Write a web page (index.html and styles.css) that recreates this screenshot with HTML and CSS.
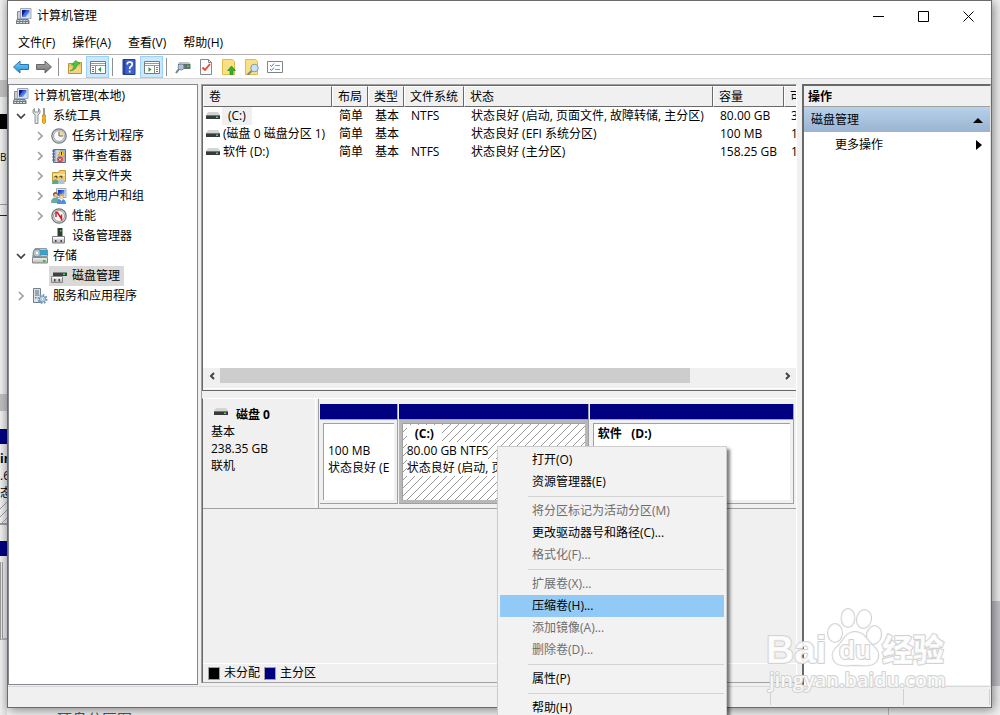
FILE: index.html
```html
<!DOCTYPE html>
<html lang="zh-CN">
<head>
<meta charset="utf-8">
<title>计算机管理</title>
<link rel="stylesheet" href="styles.css">
</head>
<body>
<svg class="sprites" aria-hidden="true">
  <defs>
    <linearGradient id="screen" x1="0" y1="0" x2="1" y2="1"><stop offset="0" stop-color="#0a1fa8"/><stop offset=".5" stop-color="#3f6fe0"/><stop offset="1" stop-color="#b9dcff"/></linearGradient>
    <linearGradient id="blue" x1="0" y1="0" x2="0" y2="1"><stop offset="0" stop-color="#7fd0f5"/><stop offset="1" stop-color="#1b8fdc"/></linearGradient>
    <linearGradient id="gray" x1="0" y1="0" x2="0" y2="1"><stop offset="0" stop-color="#b0b0b0"/><stop offset="1" stop-color="#707070"/></linearGradient>
    <linearGradient id="metal" x1="0" y1="0" x2="0" y2="1"><stop offset="0" stop-color="#f4f4f4"/><stop offset="1" stop-color="#b5b5b5"/></linearGradient>
  </defs>
  <symbol id="i-computer" viewBox="0 0 16 16"><path d="M1.500 3.500h3V11h-3z" fill="#c9ccd0" stroke="#8a8e94"/><path d="M4.500 .5h10.500v10H4.500z" fill="#dfe2e6" stroke="#a3a8af"/><path d="M6 2h7.500v7H6z" fill="url(#screen)"/><path d="M6 2h4l-4 6z" fill="#0a1890"/><path d="M10 9l3.500-5v5z" fill="#c5e2ff"/><path d="M1 11h11l1.500 2v3H0v-3z" fill="#6d7d8a"/><path d="M1.500 12.500h10M1 14.500h11" stroke="#d5dde2" stroke-dasharray="2 1"/></symbol>
  <symbol id="i-tools" viewBox="0 0 16 16"><path d="M2.500 .5L1 2v3l2 2v8.500h3V7l2-2V2L6.500 .5V4h-4z" fill="#dfe2e4" stroke="#7b7f83" stroke-width=".8"/><path d="M12 0v8" stroke="#777" stroke-width="1.500"/><path d="M10.500 7h3v2l-.5 1 .5 1v3.500l-1 1h-1l-1-1V11l.5-1-.5-1z" fill="#f7b71c" stroke="#c98400" stroke-width=".8"/></symbol>
  <symbol id="i-clock" viewBox="0 0 16 16"><circle cx="8" cy="8" r="7.200" fill="#d4d6d8" stroke="#777b80" stroke-width="1.200"/><circle cx="8" cy="8" r="5.400" fill="#fafafa" stroke="#a4a7aa"/><path d="M8 8V3.200A4.800 4.800 0 0 1 12.800 8z" fill="#f7dc9a"/><path d="M8 3.500V8h4" fill="none" stroke="#666"/></symbol>
  <symbol id="i-event" viewBox="0 0 16 16"><path d="M2.500 1.500h12v13h-12z" fill="#a7b6cc" stroke="#5d6d86"/><path d="M5 3h4M5 5h3M5 7h3M5 9h2M5 11h2M5 13h3" stroke="#e8eef8"/><path d="M1 3h3M1 6h3M1 9h3M1 12h3" stroke="#4c5a70"/><path d="M10.500 2l3.500 6H7z" fill="#ffd51c" stroke="#c49000" stroke-width=".6"/><path d="M10.500 4v3" stroke="#333"/><circle cx="9" cy="11.500" r="2.800" fill="#d9333b"/><path d="M8 10.500l2 2m0-2l-2 2" stroke="#fff"/></symbol>
  <symbol id="i-share" viewBox="0 0 16 16"><path d="M1.500 4.500h6l1-2h6v11h-13z" fill="#f3cd68" stroke="#c59a31"/><path d="M2 6h12v2H2z" fill="#fae6a0"/><circle cx="5" cy="9" r="1.600" fill="#5b4933"/><circle cx="10" cy="9" r="1.600" fill="#5b4933"/><circle cx="4.500" cy="10" r="1" fill="#f0c9a0"/><circle cx="9.500" cy="10" r="1" fill="#f0c9a0"/><path d="M1 16q0-4.500 3.500-4.500T8 16z" fill="#57aa8a"/><path d="M7 16q0-4.500 3.500-4.500T13.500 16z" fill="#a9c4de"/></symbol>
  <symbol id="i-users" viewBox="0 0 16 16"><path d="M5.500 .5h9.500v9H5.500z" fill="#dfe2e6" stroke="#a3a8af"/><path d="M7 2h6.500v6H7z" fill="url(#screen)"/><circle cx="4.500" cy="6.500" r="2.500" fill="#8b5e2c"/><circle cx="4.900" cy="7.300" r="1.600" fill="#f2c99c"/><path d="M0 15q0-5.500 4.500-5.500T9 15z" fill="#68a9a2"/><circle cx="10.500" cy="8.500" r="2.400" fill="#d9ab52"/><circle cx="10.500" cy="9.200" r="1.500" fill="#f7d9b0"/><path d="M6 16q0-5 4.500-5t4.500 5z" fill="#4f8de0"/><path d="M9 11h3l-1.500 2z" fill="#fff"/></symbol>
  <symbol id="i-perf" viewBox="0 0 16 16"><circle cx="8" cy="8" r="7.200" fill="#ddd" stroke="#6f7274" stroke-width="1.200"/><circle cx="8" cy="8" r="5.400" fill="#fff" stroke="#999"/><path d="M5 9V4.500h1.500L10.500 11V6.500" stroke="#cf1c24" stroke-width="1.500" fill="none"/></symbol>
  <symbol id="i-device" viewBox="0 0 16 16"><path d="M6.500 0h5v9h-5z" fill="#353b3d"/><path d="M9 2h1.500v1.500H9z" fill="#32df45"/><path d="M1.500 8.500h12V15h-12z" fill="url(#metal)" stroke="#808080"/><path d="M2 9h11v1.500H2z" fill="#fff"/><path d="M4 12h1.500v2H4zM9.500 12H11v2H9.500z" fill="#444"/></symbol>
  <symbol id="i-storage" viewBox="0 0 16 16"><path d="M.5 8.500L3 .5h11.500l1 8z" fill="#e5e7e9" stroke="#92979b"/><circle cx="5" cy="5" r="4" fill="#b7c3ca" stroke="#788"/><circle cx="5" cy="5" r="1.200" fill="#fff"/><path d="M8 2h7.500v5H8z" fill="#2fa6d4" stroke="#6b8190" stroke-width=".6"/><path d="M.5 9.500h15V15H.5z" fill="url(#metal)" stroke="#888"/><path d="M11 12h2.500v2H11z" fill="#25c72d"/></symbol>
  <symbol id="i-diskmgr" viewBox="0 0 16 16"><path d="M4 2h10l2 2.500H2z" fill="#d6d6d6"/><path d="M2 4.500h14V8H2z" fill="#3c4245"/><path d="M12 5.500h2v1.500h-2z" fill="#30e046"/><path d="M.5 8.500h11v6H.5z" fill="url(#metal)" stroke="#888"/><path d="M1 9h10v1H1z" fill="#fff"/><path d="M3 11h1.500v2.500H3zM7.500 11H9v2.500H7.500z" fill="#444"/></symbol>
  <symbol id="i-services" viewBox="0 0 16 16"><path d="M1.500 .5h7v14h-7z" fill="#dce2e7" stroke="#72808d"/><path d="M3 3h4M3 5h4M3 7h4" stroke="#5a6875"/><path d="M3 9h1.500v1.500H3z" fill="#57a43c"/><circle cx="10.500" cy="11" r="4" fill="none" stroke="#6a93b8" stroke-width="2" stroke-dasharray="1.600 1.500"/><circle cx="10.500" cy="11" r="3" fill="#c9def0" stroke="#6a93b8"/><circle cx="10.500" cy="11" r="1.200" fill="#fff" stroke="#6a93b8" stroke-width=".5"/></symbol>
  <symbol id="i-drive" viewBox="0 0 14 8"><path d="M2 0h10l2 3H0z" fill="#d4d4d4"/><path d="M0 3h14v4H0z" fill="#363b3d"/><path d="M0 3h14v1H0z" fill="#707577"/><path d="M10 4.500h2v1.500h-2z" fill="#2bec3f"/></symbol>
  <symbol id="i-back" viewBox="0 0 16 16"><path d="M.5 8L7 2v3.500h8.500v5H7V14z" fill="url(#blue)" stroke="#2474b0"/></symbol>
  <symbol id="i-forward" viewBox="0 0 16 16"><path d="M15.500 8L9 2v3.500H.5v5H9V14z" fill="url(#gray)" stroke="#666"/></symbol>
  <symbol id="i-up" viewBox="0 0 16 16"><path d="M1.500 4.500h6l1-1h6v11h-13z" fill="#eec56a" stroke="#bf9238"/><path d="M2 8h12v6H2z" fill="#f5d384"/><path d="M3 12Q7 10 7 6H4.500L8.500 1.500 13 4.500 10 6Q9.500 11 3 12z" fill="#45c83b" stroke="#228a20" stroke-width=".5"/></symbol>
  <symbol id="i-treepane" viewBox="0 0 16 16"><path d="M.5 2.500h15v12H.5z" fill="#fff" stroke="#777c80"/><path d="M1 4.500h14M1 6.500h14" stroke="#999"/><path d="M5.500 7v7" stroke="#888"/><path d="M2 8.500h2M2 10.500h2M2 12.500h2" stroke="#3586cb"/><path d="M11 8v5l-3-2.500z" fill="#25a236"/></symbol>
  <symbol id="i-actionpane" viewBox="0 0 16 16"><path d="M.5 2.500h15v12H.5z" fill="#fff" stroke="#777c80"/><path d="M1 4.500h14M1 6.500h14" stroke="#999"/><path d="M10.500 7v7" stroke="#888"/><path d="M12 8.500h2M12 10.500h2M12 12.500h2" stroke="#3586cb"/><path d="M4.500 8v5l3-2.500z" fill="#25a236"/></symbol>
  <symbol id="i-help" viewBox="0 0 16 16"><path d="M2 .5h12v15H2z" fill="#3d62c9" stroke="#263e91"/><path d="M2 1h2.500v14H2z" fill="#2a449d"/><path d="M6.300 5.500Q6 3 8.700 3T11.200 5.500Q11.200 7 9.500 7.800 8.700 8.300 8.700 10M8.700 11.500v2" fill="none" stroke="#fff" stroke-width="1.700"/></symbol>
  <symbol id="i-find" viewBox="0 0 16 16"><path d="M3 5h12.500v5H3z" fill="#666c70"/><path d="M4 3h10l1.500 2H3z" fill="#c4c4c4"/><path d="M12 6.500h2v1.500h-2z" fill="#2edf43"/><circle cx="6" cy="8" r="3" fill="#a9c6dd" stroke="#7e8e9b"/><path d="M4 10L1 14" stroke="#71828f" stroke-width="2"/></symbol>
  <symbol id="i-check" viewBox="0 0 16 16"><path d="M2.500 .5h8l3 3v12h-11z" fill="#fafafa" stroke="#888"/><path d="M10.500 .5v3h3" fill="none" stroke="#888"/><path d="M4.500 8.500l2.500 2.500 5-6" stroke="#e0472f" stroke-width="1.800" fill="none"/></symbol>
  <symbol id="i-export" viewBox="0 0 16 16"><path d="M1.500 .5h10l2 2v13h-12z" fill="#fbe083" stroke="#e2bc4b"/><path d="M9 15.500v-4H6.500L10.500 7l4 4.500H12v4z" fill="#30b332" stroke="#158418" stroke-width=".6"/></symbol>
  <symbol id="i-search" viewBox="0 0 16 16"><path d="M1.500 .5h10l2 2v13h-12z" fill="#fbe083" stroke="#e2bc4b"/><path d="M7.500 12l-4 4" stroke="#72889a" stroke-width="2"/><circle cx="10.500" cy="9" r="3.800" fill="#c7e3f5" stroke="#8199aa"/></symbol>
  <symbol id="i-list" viewBox="0 0 16 16"><path d="M.5 2.500h15v11H.5z" fill="#fff" stroke="#7d858b"/><path d="M8 6.500h5M8 10.500h5" stroke="#999"/><path d="M3 6l1.500 1.500L7 4.500M3 10l1.500 1.500L7 8.500" stroke="#3288d0" fill="none"/></symbol>
  <symbol id="i-open" viewBox="0 0 12 12"><path d="M2 4l4 4 4-4" fill="none" stroke="#404040" stroke-width="1.700"/></symbol>
  <symbol id="i-closed" viewBox="0 0 12 12"><path d="M4 2l4 4-4 4" fill="none" stroke="#a0a0a0" stroke-width="1.700"/></symbol>
</svg>

<div class="backdrop" aria-hidden="true">
  <div class="strip"><i class="bar bar-scroll"></i><i class="bar bar-black"></i><span class="bd-b">B</span><i class="bar bar-line"></i><i class="bar bar-scroll2"></i><i class="bar bar-navy"></i><b>in</b><span>.6</span><span>态</span><i class="bar bar-hatch"></i><i class="bar bar-navy"></i><i class="bar bar-tail"></i></div>
  <i class="side"></i>
  <span class="caption">硬盘分区图-4</span>
  <i class="tick"></i>
</div>

<main class="window">
  <header class="titlebar">
    <svg class="icon"><use href="#i-computer"/></svg>
    <h1>计算机管理</h1>
    <button aria-label="最小化"><svg viewBox="0 0 11 11"><path d="M0 5.500h11"/></svg></button>
    <button aria-label="最大化"><svg viewBox="0 0 11 11"><path d="M.5 .5h10v10H.5z"/></svg></button>
    <button aria-label="关闭"><svg viewBox="0 0 11 11"><path d="M.5 .5l10 10m0-10l-10 10"/></svg></button>
  </header>
  <nav class="menubar"><button>文件(F)</button><button>操作(A)</button><button>查看(V)</button><button>帮助(H)</button></nav>
  <div class="toolbar">
    <button aria-label="后退"><svg class="icon"><use href="#i-back"/></svg></button>
    <button aria-label="前进"><svg class="icon"><use href="#i-forward"/></svg></button>
    <i class="sep"></i>
    <button aria-label="向上"><svg class="icon"><use href="#i-up"/></svg></button>
    <button class="on" aria-label="显示控制台树"><svg class="icon"><use href="#i-treepane"/></svg></button>
    <i class="sep"></i>
    <button aria-label="帮助"><svg class="icon"><use href="#i-help"/></svg></button>
    <button class="on" aria-label="显示操作窗格"><svg class="icon"><use href="#i-actionpane"/></svg></button>
    <i class="sep"></i>
    <button aria-label="重新扫描"><svg class="icon"><use href="#i-find"/></svg></button>
    <button aria-label="属性"><svg class="icon"><use href="#i-check"/></svg></button>
    <button aria-label="导出"><svg class="icon"><use href="#i-export"/></svg></button>
    <button aria-label="查找"><svg class="icon"><use href="#i-search"/></svg></button>
    <button aria-label="设置"><svg class="icon"><use href="#i-list"/></svg></button>
  </div>

  <div class="panes">
    <ul class="tree">
      <li class="l0"><span class="label"><svg class="icon"><use href="#i-computer"/></svg>计算机管理(本地)</span></li>
      <li class="l1"><svg class="chev"><use href="#i-open"/></svg><span class="label"><svg class="icon"><use href="#i-tools"/></svg>系统工具</span></li>
      <li class="l2"><svg class="chev"><use href="#i-closed"/></svg><span class="label"><svg class="icon"><use href="#i-clock"/></svg>任务计划程序</span></li>
      <li class="l2"><svg class="chev"><use href="#i-closed"/></svg><span class="label"><svg class="icon"><use href="#i-event"/></svg>事件查看器</span></li>
      <li class="l2"><svg class="chev"><use href="#i-closed"/></svg><span class="label"><svg class="icon"><use href="#i-share"/></svg>共享文件夹</span></li>
      <li class="l2"><svg class="chev"><use href="#i-closed"/></svg><span class="label"><svg class="icon"><use href="#i-users"/></svg>本地用户和组</span></li>
      <li class="l2"><svg class="chev"><use href="#i-closed"/></svg><span class="label"><svg class="icon"><use href="#i-perf"/></svg>性能</span></li>
      <li class="l2"><i class="chev"></i><span class="label"><svg class="icon"><use href="#i-device"/></svg>设备管理器</span></li>
      <li class="l1"><svg class="chev"><use href="#i-open"/></svg><span class="label"><svg class="icon"><use href="#i-storage"/></svg>存储</span></li>
      <li class="l2"><i class="chev"></i><span class="label selected"><svg class="icon"><use href="#i-diskmgr"/></svg>磁盘管理</span></li>
      <li class="l1"><svg class="chev"><use href="#i-closed"/></svg><span class="label"><svg class="icon"><use href="#i-services"/></svg>服务和应用程序</span></li>
    </ul>

    <section class="center">
      <div class="volumes">
        <div class="table-wrap">
          <table>
            <colgroup><col class="c-vol"><col class="c-short"><col class="c-short"><col class="c-fs"><col class="c-state"><col class="c-size"><col class="c-free"></colgroup>
            <thead><tr><th>卷</th><th>布局</th><th>类型</th><th>文件系统</th><th>状态</th><th>容量</th><th>可</th></tr></thead>
            <tbody>
              <tr><td><svg class="drive"><use href="#i-drive"/></svg><span class="vol focus">(C:)</span></td><td>简单</td><td>基本</td><td>NTFS</td><td>状态良好 (启动, 页面文件, 故障转储, 主分区)</td><td>80.00 GB</td><td>3</td></tr>
              <tr><td><svg class="drive"><use href="#i-drive"/></svg><span class="vol">(磁盘 0 磁盘分区 1)</span></td><td>简单</td><td>基本</td><td></td><td>状态良好 (EFI 系统分区)</td><td>100 MB</td><td>1</td></tr>
              <tr><td><svg class="drive"><use href="#i-drive"/></svg><span class="vol">软件 (D:)</span></td><td>简单</td><td>基本</td><td>NTFS</td><td>状态良好 (主分区)</td><td>158.25 GB</td><td>1</td></tr>
            </tbody>
          </table>
        </div>
        <div class="hscroll">
          <button aria-label="向左滚动"><svg viewBox="0 0 8 8"><path d="M6 1L3 4l3 3"/></svg></button>
          <div class="track"><div class="thumb"></div></div>
          <button aria-label="向右滚动"><svg viewBox="0 0 8 8"><path d="M2 1l3 3-3 3"/></svg></button>
        </div>
      </div>
      <div class="graph">
        <div class="disk">
          <div class="disk-info">
            <h2><svg class="drive"><use href="#i-drive"/></svg>磁盘 0</h2>
            <p>基本</p><p>238.35 GB</p><p>联机</p>
          </div>
          <div class="parts">
            <div class="part p-efi"><div class="cap"></div><div class="box"><p class="name"></p><p>100 MB</p><p>状态良好 (E</p></div></div>
            <div class="part p-c"><div class="cap"></div><div class="box"><p class="name"><span>(C:)</span></p><p><span>80.00 GB NTFS</span></p><p><span>状态良好 (启动, 页面文件</span></p></div></div>
            <div class="part p-d"><div class="cap"></div><div class="box"><p class="name">软件&nbsp;&nbsp; (D:)</p></div></div>
          </div>
        </div>
        <div class="legend"><i class="key k-free"></i>未分配<i class="key k-primary"></i>主分区</div>
      </div>
    </section>

    <aside class="actions">
      <h2>操作</h2>
      <button class="group">磁盘管理<svg viewBox="0 0 10 6"><path d="M0 6l5-5 5 5z"/></svg></button>
      <button class="more">更多操作<svg viewBox="0 0 6 10"><path d="M0 0l6 5-6 5z"/></svg></button>
    </aside>
  </div>
  <footer class="status"><i></i><i></i><i></i></footer>
</main>

<div class="context" role="menu">
  <button role="menuitem">打开(O)</button>
  <button role="menuitem">资源管理器(E)</button>
  <hr>
  <button role="menuitem" disabled>将分区标记为活动分区(M)</button>
  <button role="menuitem">更改驱动器号和路径(C)...</button>
  <button role="menuitem" disabled>格式化(F)...</button>
  <hr>
  <button role="menuitem" disabled>扩展卷(X)...</button>
  <button role="menuitem" class="hot">压缩卷(H)...</button>
  <button role="menuitem" disabled>添加镜像(A)...</button>
  <button role="menuitem" disabled>删除卷(D)...</button>
  <hr>
  <button role="menuitem">属性(P)</button>
  <hr>
  <button role="menuitem">帮助(H)</button>
</div>

<svg class="watermark" viewBox="0 0 190 90" role="img" aria-label="Baidu 经验">
  <g class="wm">
    <text class="wm-bai" x="4" y="57">Bai</text>
    <ellipse cx="73" cy="27" rx="7" ry="9"/><ellipse cx="86" cy="12" rx="6.500" ry="9"/><ellipse cx="102" cy="13" rx="7" ry="9" transform="rotate(12 102 13)"/><ellipse cx="112" cy="29" rx="7" ry="9" transform="rotate(12 112 29)"/>
    <path d="M93 26c-10 0-11 9-17 14-5 4-6 8-5 12 2 8 10 8 22 7 12 1 21 1 23-7 1-5-1-9-5-12-6-5-8-14-18-14z"/>
    <text class="wm-du" x="77" y="53">du</text>
    <text class="wm-cn" x="120" y="55">经验</text>
    <text class="wm-url" x="7" y="81">jingyan.baidu.com</text>
  </g>
</svg>
</body>
</html>
```

FILE: styles.css
```css
* { box-sizing: border-box; }

html, body { height: 100%; }

body {
  margin: 0;
  padding: 0 8px 7px 7px;
  overflow: hidden;
  position: relative;
  background: #f1f1f1;
  color: #000;
  font: 12px/18px "Open Sans", "Noto Sans CJK SC", sans-serif;
}

h1, h2, p, ul { margin: 0; padding: 0; font-size: 12px; font-weight: 400; }
ul { list-style: none; }

button {
  margin: 0;
  padding: 0;
  border: 0;
  background: none;
  color: inherit;
  font: inherit;
  text-align: left;
  white-space: nowrap;
}

.sprites { position: absolute; width: 0; height: 0; }
.icon { width: 16px; height: 16px; flex: none; }
.drive { width: 14px; height: 8px; flex: none; }

/* content behind the window */
.backdrop { position: absolute; inset: 0; overflow: hidden; }
.strip { width: 7px; height: 100%; padding-top: 80px; display: flex; flex-direction: column; overflow: hidden; line-height: 17px; background: linear-gradient(90deg, #efefef, #dcdcdc); }
.strip b, .strip span { flex: none; }
.bar { flex: none; }
.bar-scroll { height: 17px; background: #bebebe; margin-bottom: 17px; }
.bar-black { height: 15px; background: #000; }
.strip .bd-b { padding: 20px 0 38px; font-size: 10px; }
.bar-line { height: 12px; border-top: 1px solid #999; border-bottom: 1px solid #1a1a80; }
.bar-scroll2 { height: 17px; margin: 178px 0 18px; background: #bcbcbc; }
.bar-navy { height: 15px; background: #000080; margin-bottom: 6px; }
.bar-hatch { height: 24px; margin-bottom: 16px; border-bottom: 2px solid #999; background: linear-gradient(135deg, transparent 46%, #999 46% 54%, transparent 54%) 0 0 / 8px 8px; }
.bar-tail { height: 78px; border-bottom: 2px solid #b0b0b0; border-left: 3px double #999; }
.side { position: absolute; right: 0; top: 601px; width: 8px; height: 85px; background: #c4c4ca; }
.caption { position: absolute; left: 57px; top: 709px; color: #555; font-size: 15px; line-height: 20px; }
.tick { position: absolute; left: 888px; bottom: 0; width: 1px; height: 8px; background: #bbb; }

/* window frame */
.window {
  position: relative;
  height: 100%;
  display: flex;
  flex-direction: column;
  background: #f0f0f0;
  border: 1px solid #6b6b6b;
  box-shadow: 2px 2px 10px rgba(0, 0, 0, .45);
}

.titlebar { height: 30px; flex: none; display: flex; align-items: center; background: #fff; padding-left: 8px; }
.titlebar h1 { margin-left: 5px; flex: 1; }
.titlebar button { width: 45px; height: 30px; display: grid; place-items: center; }
.titlebar button svg { width: 11px; height: 11px; fill: none; stroke: #000; }

.menubar { height: 24px; flex: none; display: flex; align-items: center; gap: 17px; padding-left: 10px; background: #fff; border-bottom: 1px solid #b0b0b0; }

.toolbar { height: 24px; flex: none; display: flex; align-items: center; padding-left: 1px; background: #fff; border-bottom: 1px solid #d8d8d8; }
.toolbar button { width: 23px; height: 22px; display: grid; place-items: center; }
.toolbar button.on { background: #cce8ff; border: 1px solid #99d1ff; }
.sep { width: 1px; height: 18px; margin: 0 4px 0 3px; background: #909090; }

.panes { flex: 1; min-height: 0; display: flex; margin-top: 5px; }

/* console tree */
.tree { width: 190px; flex: none; padding-top: 1px; background: #fff; border: 1px solid #828790; }
.tree li { height: 20px; display: flex; align-items: center; }
.label { height: 20px; display: flex; align-items: center; gap: 5px; padding: 0 4px 0 2px; white-space: nowrap; }
.selected { background: #d9d9d9; }
.chev { width: 12px; height: 12px; margin-right: 3px; flex: none; }
.l0 { padding-left: 2px; }
.l1 { padding-left: 6px; }
.l2 { padding-left: 25px; }

/* volume list */
.center { flex: 1; min-width: 0; margin: 0 5px 2px 3px; display: flex; flex-direction: column; border-top: 1px solid #a0a0a0; border-left: 1px solid #a0a0a0; border-right: 1px solid #fff; }
.volumes { height: 306px; flex: none; display: flex; flex-direction: column; border-top: 1px solid #696969; border-left: 1px solid #696969; border-bottom: 1px solid #696969; }
.table-wrap { flex: 1; min-height: 0; overflow: hidden; background: #fff; }
table { width: 662px; table-layout: fixed; border-collapse: separate; border-spacing: 0; }
.c-vol { width: 129px; }
.c-short { width: 36px; }
.c-fs { width: 60px; }
.c-state { width: 249px; }
.c-size { width: 71px; }
th { height: 21px; padding: 0 0 0 5px; background: #f0f0f0; font-weight: 400; text-align: left; white-space: nowrap; overflow: hidden; border: 1px solid #fff; border-right-color: #696969; border-bottom-color: #696969; }
td { height: 18px; padding: 0 0 0 7px; white-space: nowrap; overflow: hidden; line-height: 18px; }
td:first-child { padding-left: 3px; }
td .drive { margin-right: 2px; }
.vol { padding: 0 1px; }
.vol.focus { display: inline-block; padding: 0 6px; background: #f0f0f0; }

.hscroll { height: 16px; flex: none; display: flex; margin-bottom: 6px; box-shadow: 0 4px 0 #f0f0f0, 0 5px 0 #fff; }
.hscroll button { width: 17px; display: grid; place-items: center; }
.hscroll svg { width: 8px; height: 8px; fill: none; stroke: #444; stroke-width: 2; }
.track { flex: 1; }
.thumb { width: 84%; height: 15px; background: #cdcdcd; }

/* graphical view */
.graph { flex: 1; min-height: 0; margin-top: 7px; display: flex; flex-direction: column; border-top: 1px solid #fff; border-left: 1px solid #696969; border-bottom: 1px solid #a0a0a0; }
.disk { display: flex; height: 110px; border-bottom: 1px solid #a0a0a0; }
.disk-info { width: 116px; flex: none; padding: 7px 8px; border-right: 1px solid #a0a0a0; box-shadow: inset -2px 0 #f0f0f0, inset -3px 0 #fff; line-height: 17px; }
.disk-info h2, .name { font-weight: 700; }
.disk-info h2 { display: flex; gap: 8px; padding-left: 3px; line-height: 17px; }
.disk-info h2 .drive { margin-top: 2px; }
.parts { flex: 1; min-width: 0; display: flex; gap: 1px; padding: 5px 2px 4px 1px; }
.part { min-width: 0; display: flex; flex-direction: column; border-right: 1px solid #a0a0a0; border-bottom: 1px solid #a0a0a0; }
.p-efi { flex: 77; }
.p-c { flex: 190; background: #b8b8b8; }
.p-d { flex: 204; }
.cap { height: 16px; flex: none; background: #000080; border-bottom: 1px solid #a0a0a0; }
.box { flex: 1; margin: 3px; padding: 1px 0 0 4px; overflow: hidden; white-space: nowrap; line-height: 17px; background: #fff; border-top: 1px solid #a0a0a0; border-left: 1px solid #a0a0a0; }
.name { min-height: 17px; }
.p-c .box { background: linear-gradient(135deg, transparent 47%, #999 47% 53%, transparent 53%) 0 0 / 8px 8px #fff; }
.p-c span { display: inline-block; background: #fff; }
.p-c .name span { padding: 0 8px; }
.legend { margin-top: auto; height: 19px; display: flex; align-items: center; gap: 4px; padding-left: 5px; border-top: 1px solid #fff; }
.key { width: 12px; height: 13px; border: 1px solid #a0a0a0; }
.k-free { background: #000; }
.k-primary { background: #000080; }

/* actions pane */
.actions { width: 189px; flex: none; display: flex; flex-direction: column; background: #fff; border-top: 2px solid #696969; border-left: 2px solid #696969; border-right: 1px solid #e0e0e0; }
.actions h2 { height: 21px; padding-left: 4px; line-height: 21px; font-weight: 700; background: #f0f0f0; border-bottom: 1px solid #a0a0a0; }
.actions button { height: 25px; display: flex; align-items: center; justify-content: space-between; }
.group { padding: 0 7px; background: linear-gradient(#b9d1ea, #99b4d1); }
.group svg { width: 10px; height: 6px; }
.more { padding: 0 8px 0 31px; }
.more svg { width: 6px; height: 10px; }

.status { height: 21px; flex: none; display: flex; justify-content: flex-end; margin-top: 1px; padding: 2px 1px; border-top: 1px solid #d8d8d8; }
.status i { border-right: 1px solid #d0d0d0; }
.status i:nth-child(n+2) { width: 133px; }
.status i:last-child { width: 86px; }

/* context menu */
.context { position: absolute; left: 497px; top: 446px; width: 230px; padding: 2px; background: #f2f2f2; border: 1px solid #ccc; box-shadow: 3px 3px 3px rgba(0, 0, 0, .5); }
.context button { width: 100%; height: 22px; display: block; padding-left: 32px; line-height: 22px; }
.context button:disabled { color: #6d6d6d; }
.context .hot { background: #91c9f7; }
.context hr { height: 1px; margin: 3px 0 3px 28px; border: 0; background: #d2d2d2; }

/* site mark over the corner */
.watermark { position: absolute; left: 762px; top: 606px; width: 190px; height: 90px; pointer-events: none; }
.wm { fill: #fff; fill-opacity: .85; stroke: #d2d2d2; stroke-width: 2; paint-order: stroke; stroke-linejoin: round; }
.wm-bai { font: 700 39px "Liberation Sans", sans-serif; }
.wm-du { font: 700 26px "Liberation Sans", sans-serif; }
.wm-cn { font: 900 31px "Noto Sans CJK SC", sans-serif; }
.wm-url { font: 600 20px "Open Sans", sans-serif; }
```
